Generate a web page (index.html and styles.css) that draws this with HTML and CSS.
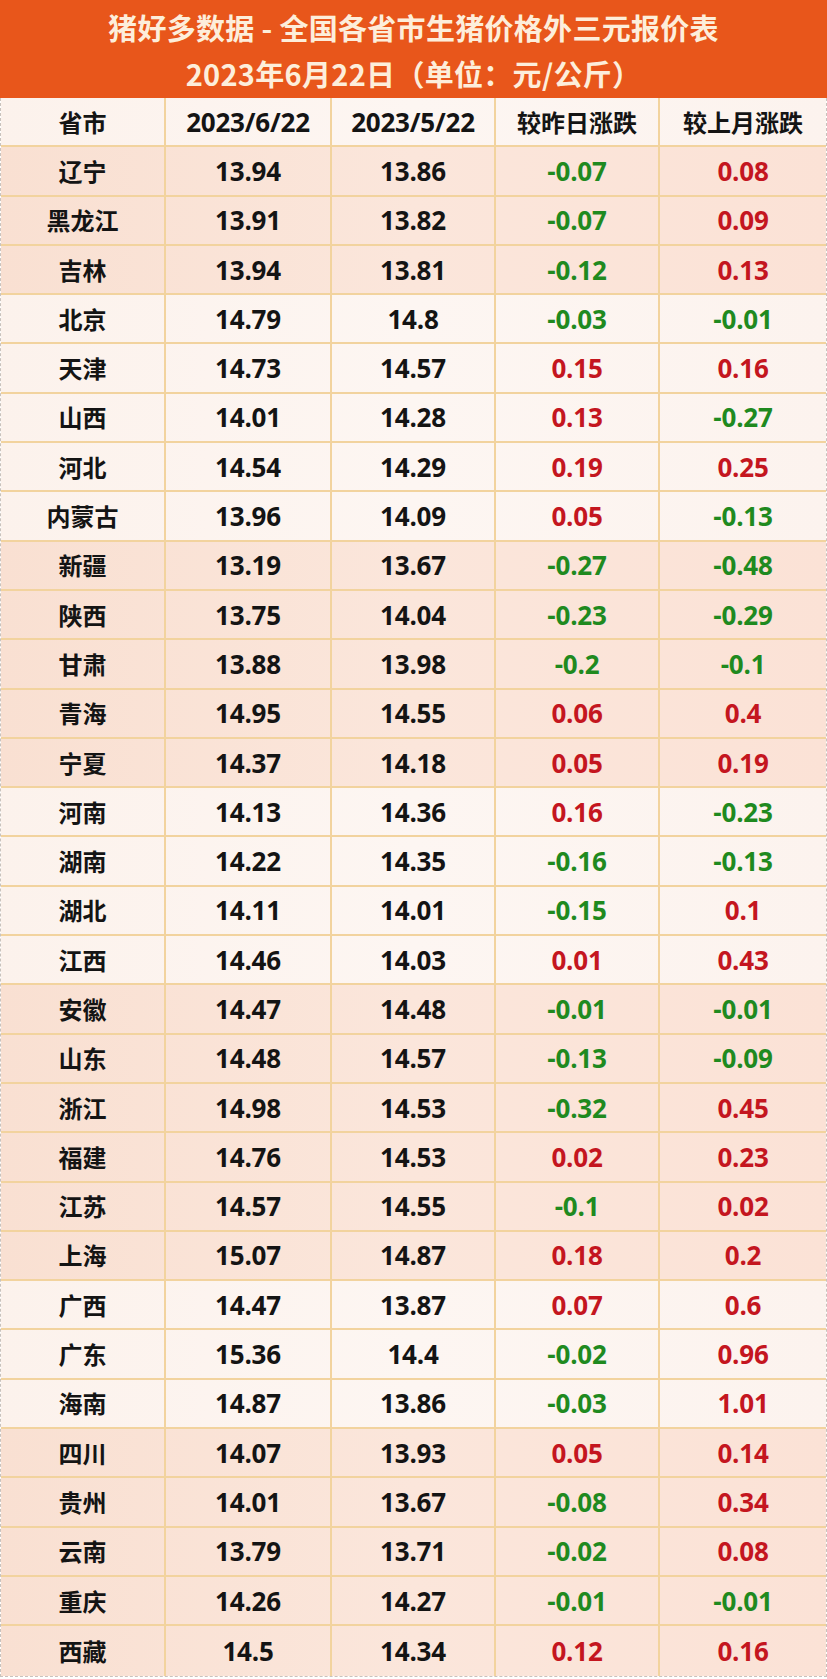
FILE: index.html
```html
<!DOCTYPE html>
<html lang="zh-CN">
<head>
<meta charset="utf-8">
<title>猪好多数据 - 全国各省市生猪价格外三元报价表</title>
<link rel="stylesheet" href="styles.css">
</head>
<body>
<div class="sheet">
  <header class="banner">
    <div class="title">猪好多数据&nbsp;-&nbsp;全国各省市生猪价格外三元报价表</div>
    <div class="subtitle">2023年6月22日（单位：元/公斤）</div>
  </header>
  <div class="table">
    <div class="row head light"><div class="cell">省市</div><div class="cell num">2023/6/22</div><div class="cell num">2023/5/22</div><div class="cell">较昨日涨跌</div><div class="cell">较上月涨跌</div></div>
    <div class="row peach"><div class="cell">辽宁</div><div class="cell num">13.94</div><div class="cell num">13.86</div><div class="cell num dn">-0.07</div><div class="cell num up">0.08</div></div>
    <div class="row peach"><div class="cell">黑龙江</div><div class="cell num">13.91</div><div class="cell num">13.82</div><div class="cell num dn">-0.07</div><div class="cell num up">0.09</div></div>
    <div class="row peach"><div class="cell">吉林</div><div class="cell num">13.94</div><div class="cell num">13.81</div><div class="cell num dn">-0.12</div><div class="cell num up">0.13</div></div>
    <div class="row light"><div class="cell">北京</div><div class="cell num">14.79</div><div class="cell num">14.8</div><div class="cell num dn">-0.03</div><div class="cell num dn">-0.01</div></div>
    <div class="row light"><div class="cell">天津</div><div class="cell num">14.73</div><div class="cell num">14.57</div><div class="cell num up">0.15</div><div class="cell num up">0.16</div></div>
    <div class="row light"><div class="cell">山西</div><div class="cell num">14.01</div><div class="cell num">14.28</div><div class="cell num up">0.13</div><div class="cell num dn">-0.27</div></div>
    <div class="row light"><div class="cell">河北</div><div class="cell num">14.54</div><div class="cell num">14.29</div><div class="cell num up">0.19</div><div class="cell num up">0.25</div></div>
    <div class="row light"><div class="cell">内蒙古</div><div class="cell num">13.96</div><div class="cell num">14.09</div><div class="cell num up">0.05</div><div class="cell num dn">-0.13</div></div>
    <div class="row peach"><div class="cell">新疆</div><div class="cell num">13.19</div><div class="cell num">13.67</div><div class="cell num dn">-0.27</div><div class="cell num dn">-0.48</div></div>
    <div class="row peach"><div class="cell">陕西</div><div class="cell num">13.75</div><div class="cell num">14.04</div><div class="cell num dn">-0.23</div><div class="cell num dn">-0.29</div></div>
    <div class="row peach"><div class="cell">甘肃</div><div class="cell num">13.88</div><div class="cell num">13.98</div><div class="cell num dn">-0.2</div><div class="cell num dn">-0.1</div></div>
    <div class="row peach"><div class="cell">青海</div><div class="cell num">14.95</div><div class="cell num">14.55</div><div class="cell num up">0.06</div><div class="cell num up">0.4</div></div>
    <div class="row peach"><div class="cell">宁夏</div><div class="cell num">14.37</div><div class="cell num">14.18</div><div class="cell num up">0.05</div><div class="cell num up">0.19</div></div>
    <div class="row light"><div class="cell">河南</div><div class="cell num">14.13</div><div class="cell num">14.36</div><div class="cell num up">0.16</div><div class="cell num dn">-0.23</div></div>
    <div class="row light"><div class="cell">湖南</div><div class="cell num">14.22</div><div class="cell num">14.35</div><div class="cell num dn">-0.16</div><div class="cell num dn">-0.13</div></div>
    <div class="row light"><div class="cell">湖北</div><div class="cell num">14.11</div><div class="cell num">14.01</div><div class="cell num dn">-0.15</div><div class="cell num up">0.1</div></div>
    <div class="row light"><div class="cell">江西</div><div class="cell num">14.46</div><div class="cell num">14.03</div><div class="cell num up">0.01</div><div class="cell num up">0.43</div></div>
    <div class="row peach"><div class="cell">安徽</div><div class="cell num">14.47</div><div class="cell num">14.48</div><div class="cell num dn">-0.01</div><div class="cell num dn">-0.01</div></div>
    <div class="row peach"><div class="cell">山东</div><div class="cell num">14.48</div><div class="cell num">14.57</div><div class="cell num dn">-0.13</div><div class="cell num dn">-0.09</div></div>
    <div class="row peach"><div class="cell">浙江</div><div class="cell num">14.98</div><div class="cell num">14.53</div><div class="cell num dn">-0.32</div><div class="cell num up">0.45</div></div>
    <div class="row peach"><div class="cell">福建</div><div class="cell num">14.76</div><div class="cell num">14.53</div><div class="cell num up">0.02</div><div class="cell num up">0.23</div></div>
    <div class="row peach"><div class="cell">江苏</div><div class="cell num">14.57</div><div class="cell num">14.55</div><div class="cell num dn">-0.1</div><div class="cell num up">0.02</div></div>
    <div class="row peach"><div class="cell">上海</div><div class="cell num">15.07</div><div class="cell num">14.87</div><div class="cell num up">0.18</div><div class="cell num up">0.2</div></div>
    <div class="row light"><div class="cell">广西</div><div class="cell num">14.47</div><div class="cell num">13.87</div><div class="cell num up">0.07</div><div class="cell num up">0.6</div></div>
    <div class="row light"><div class="cell">广东</div><div class="cell num">15.36</div><div class="cell num">14.4</div><div class="cell num dn">-0.02</div><div class="cell num up">0.96</div></div>
    <div class="row light"><div class="cell">海南</div><div class="cell num">14.87</div><div class="cell num">13.86</div><div class="cell num dn">-0.03</div><div class="cell num up">1.01</div></div>
    <div class="row peach"><div class="cell">四川</div><div class="cell num">14.07</div><div class="cell num">13.93</div><div class="cell num up">0.05</div><div class="cell num up">0.14</div></div>
    <div class="row peach"><div class="cell">贵州</div><div class="cell num">14.01</div><div class="cell num">13.67</div><div class="cell num dn">-0.08</div><div class="cell num up">0.34</div></div>
    <div class="row peach"><div class="cell">云南</div><div class="cell num">13.79</div><div class="cell num">13.71</div><div class="cell num dn">-0.02</div><div class="cell num up">0.08</div></div>
    <div class="row peach"><div class="cell">重庆</div><div class="cell num">14.26</div><div class="cell num">14.27</div><div class="cell num dn">-0.01</div><div class="cell num dn">-0.01</div></div>
    <div class="row peach"><div class="cell">西藏</div><div class="cell num">14.5</div><div class="cell num">14.34</div><div class="cell num up">0.12</div><div class="cell num up">0.16</div></div>
  </div>
</div>
</body>
</html>
```

FILE: styles.css
```css
html, body {
  margin: 0;
  padding: 0;
  background: #ffffff;
}

.sheet {
  width: 827px;
  font-family: "Noto Sans CJK SC", "Noto Sans", sans-serif;
  font-weight: 700;
}

.banner {
  height: 98px;
  background: #e8561b;
  color: #fdeedb;
  display: flex;
  flex-direction: column;
  align-items: center;
  justify-content: center;
  gap: 4px;
  box-sizing: border-box;
  padding-top: 2px;
}

.title,
.subtitle {
  font-size: 29px;
  line-height: 42px;
  letter-spacing: 0.3px;
}

.table {
  border-left: 1px dashed #c9c2bc;
  border-right: 1px dashed #c9c2bc;
  border-bottom: 1px dashed #c9c2bc;
  box-sizing: border-box;
}

.row {
  display: grid;
  grid-template-columns: 165px 166px 164px 164px 1fr;
  height: 49.3px;
  box-sizing: border-box;
  border-bottom: 2px solid #f2d39e;
}

.row:last-child {
  border-bottom: none;
}

.row.light {
  background: linear-gradient(90deg, #fcf2ec 0%, #fdf6f2 50%, #fcf3ee 100%);
}

.row.peach {
  background: linear-gradient(90deg, #f9e0d2 0%, #fbe6db 50%, #fbe2d6 100%);
}

.cell {
  display: flex;
  align-items: center;
  justify-content: center;
  border-right: 2px solid #f2d39e;
  font-size: 24px;
  color: #141414;
  line-height: 1;
}

.cell:last-child {
  border-right: none;
}

.num {
  font-family: "Open Sans", "Noto Sans CJK SC", sans-serif;
  font-size: 26px;
  font-weight: 700;
  letter-spacing: -0.2px;
}

.dn {
  color: #1f8a1f;
}

.up {
  color: #c4161f;
}
```
